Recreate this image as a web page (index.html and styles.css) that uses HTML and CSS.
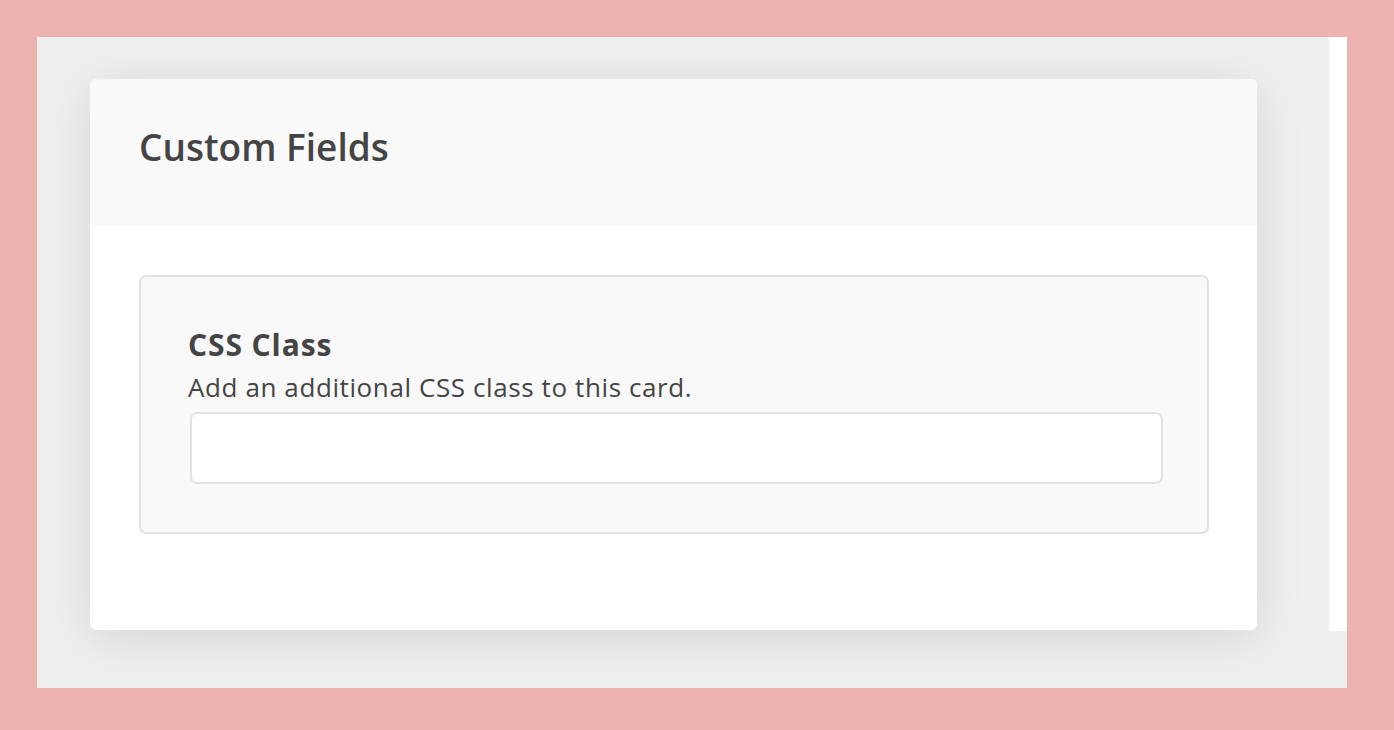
FILE: index.html
```html
<!DOCTYPE html>
<html>
<head>
<meta charset="utf-8">
<link rel="stylesheet" href="styles.css">
</head>
<body>
<div class="frame">
  <div class="stage">
    <div class="card">
      <div class="card-header">
        <h2 class="card-title">Custom Fields</h2>
      </div>
      <div class="card-body">
        <div class="field-box">
          <label class="field-label" for="cssclass">CSS Class</label>
          <div class="field-help">Add an additional CSS class to this card.</div>
          <input class="field-input" id="cssclass" type="text">
        </div>
      </div>
    </div>
  </div>
  <div class="strip"></div>
</div>
</body>
</html>
```
FILE: styles.css
```css
html, body {
  margin: 0;
  padding: 0;
}
body {
  background: #edb3ae;
  padding: 37px 47px 42px 37px;
  font-family: "Open Sans", Lato, "Liberation Sans", sans-serif;
  color: #444;
}
.frame {
  display: flex;
  align-items: flex-start;
  height: 651px;
  background: #efefef;
}
.stage {
  width: 1292px;
  height: 651px;
  box-sizing: border-box;
  padding: 42px 72px 0 53px;
  overflow: hidden;
}
.strip {
  width: 18px;
  height: 594px;
  background: #fff;
}
.card {
  width: 1167px;
  height: 551px;
  background: #fff;
  border-radius: 6px;
  box-shadow: 0 8px 50px rgba(0,0,0,0.11);
  overflow: hidden;
}
.card-header {
  height: 147px;
  box-sizing: border-box;
  background: #f9f9f9;
  padding: 49px 49px 0;
}
.card-title {
  margin: 0;
  font-size: 37px;
  line-height: 37px;
  font-weight: 600;
  color: #444;
}
.card-body {
  padding: 49px 48px 0 49px;
}
.field-box {
  height: 259px;
  box-sizing: border-box;
  background: #f9f9f9;
  border: 2px solid #e2e2e2;
  border-radius: 7px;
  padding: 53px 46px 0 47px;
}
.field-label {
  display: block;
  font-size: 30px;
  font-weight: 700;
  line-height: 30px;
  letter-spacing: 0.9px;
  color: #444;
}
.field-help {
  font-size: 26px;
  line-height: 30px;
  letter-spacing: 0.6px;
  margin-top: 12px;
  color: #444;
}
.field-input {
  display: block;
  box-sizing: border-box;
  width: 973px;
  height: 72px;
  margin: 10px 0 0 2px;
  border: 2px solid #e2e2e2;
  border-radius: 7px;
  background: #fff;
  outline: none;
}
```
